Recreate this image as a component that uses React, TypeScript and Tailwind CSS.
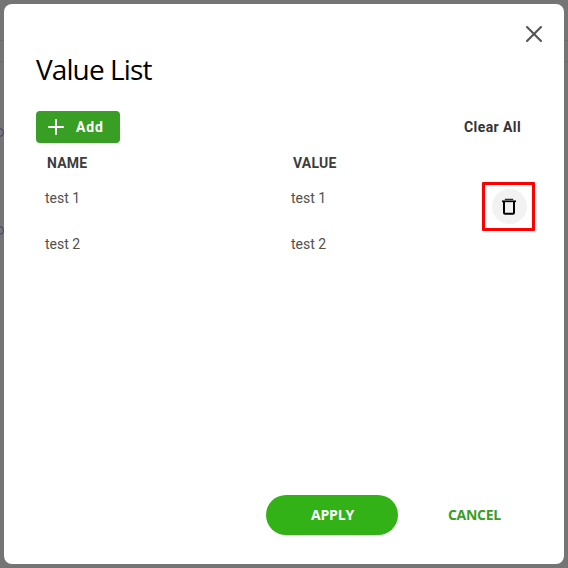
import { X, Plus } from "lucide-react";

const ff = "[font-family:Roboto,'Liberation_Sans',sans-serif]";

function Trash() {
  return (
    <svg width="16" height="18" viewBox="0 0 16 18" fill="none">
      <path d="M3.8 1.3h8.4" stroke="#000" strokeWidth="1" />
      <path d="M1 3.3h14" stroke="#000" strokeWidth="1.7" />
      <path d="M3 4v10.8a1 1 0 0 0 1 1h8a1 1 0 0 0 1-1V4" stroke="#000" strokeWidth="2" />
    </svg>
  );
}

export default function App() {
  return (
    <div className={`w-[568px] h-[568px] bg-[#757575] p-1 relative overflow-hidden ${ff}`}>
      <div className="absolute left-0 right-0 top-[40px] h-px bg-[#6b6b6b]" />
      <div className="absolute left-0 right-0 top-[61px] h-px bg-[#6b6b6b]" />
      <div className="absolute left-[-5px] top-[128px] w-[9px] h-[9px] rounded-full border border-[#4a3a6e]" />
      <div className="absolute left-[-5px] top-[226px] w-[9px] h-[9px] rounded-full border border-[#4a3a6e]" />
      <div className="relative w-full h-full bg-white rounded-lg flex flex-col pl-8 pr-[29px]">
        <button className="absolute top-[16px] right-[16px] text-[#555555]">
          <X size={28} strokeWidth={1.8} />
        </button>
        <h1 className="mt-[47px] h-[36px] text-[28px] leading-[36px] tracking-[-0.9px] text-[#000000] font-normal [font-family:'Open_Sans',sans-serif]">
          Value List
        </h1>
        <div className="mt-[24px] flex items-center justify-between">
          <div className="w-[84px] h-8 rounded bg-[#389e24] flex items-center pl-2 gap-2 text-white text-[14px] font-bold tracking-[0.9px]">
            <Plus size={24} strokeWidth={2} />
            <span>Add</span>
          </div>
          <span className="pr-[14px] text-[14px] font-bold text-[#333333] tracking-[0.4px]">Clear All</span>
        </div>
        <div className="mt-[12px] pb-px flex h-[17px] items-center text-[14px] font-bold text-[#3d3d3d] tracking-[0.2px]">
          <span className="w-[246px] pl-[11px]">NAME</span>
          <span className="pl-[11px]">VALUE</span>
        </div>
        <div className="mt-[10px] flex h-[48px] relative">
          <div className="flex w-full text-[14px] text-[#505050] pt-[8px] leading-[16px]">
            <span className="w-[246px] pl-[9px]">test 1</span>
            <span className="pl-[9px]">test 1</span>
          </div>
          <div className="absolute right-0 top-0 w-[53px] h-[49px] border-[3px] border-[#ff0000] rounded-[1px] flex items-center justify-center">
            <div className="ml-px w-[35px] h-[35px] rounded-full bg-[#f2f2f2] flex items-center justify-center">
              <Trash />
            </div>
          </div>
        </div>
        <div className="flex text-[14px] text-[#505050] leading-[16px] mt-[6px]">
          <span className="w-[246px] pl-[9px]">test 2</span>
          <span className="pl-[9px]">test 2</span>
        </div>
        <div className="mt-auto mb-[29px] flex items-center">
          <div className="ml-[230px] w-[132px] h-10 pb-px pl-px rounded-[20px] bg-[#32b216] flex items-center justify-center text-white text-[14px] font-bold tracking-[-0.2px] [font-family:'Open_Sans',sans-serif]">
            APPLY
          </div>
          <span className="ml-[50px] pb-0.5 text-[14px] font-bold tracking-[-0.3px] text-[#389e24] [font-family:'Open_Sans',sans-serif]">CANCEL</span>
        </div>
      </div>
    </div>
  );
}
